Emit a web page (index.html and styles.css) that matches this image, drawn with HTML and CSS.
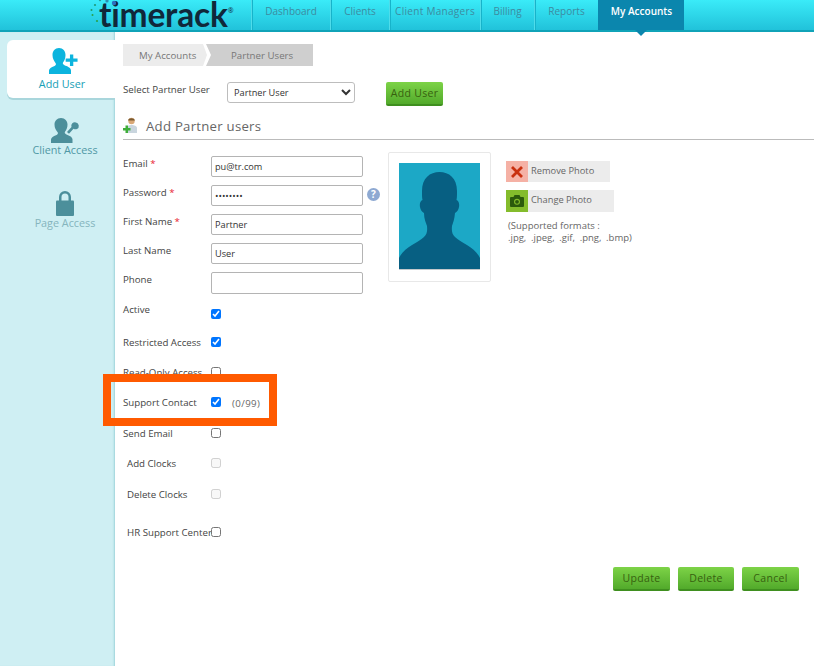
FILE: index.html
```html
<!DOCTYPE html>
<html lang="en">
<head>
<meta charset="utf-8">
<title>Add Partner users</title>
<link rel="stylesheet" href="styles.css">
</head>
<body>
<div class="page">
  <header class="topbar">
    <div class="logo">
      <svg class="logo-dots" width="30" height="24" viewBox="0 0 30 24" aria-hidden="true">
        <circle cx="24" cy="3" r="2.2" fill="#2d6fc0"/><circle cx="17" cy="1" r="1.6" fill="#2a8fb0"/><circle cx="10" cy="0" r="1.2" fill="#2a9a9a"/>
        <circle cx="5" cy="5" r="1.1" fill="#1f9a7a"/><circle cx="1.5" cy="10" r="1" fill="#1f9a6a"/><circle cx="2.5" cy="15" r="1" fill="#2aa04a"/><circle cx="7" cy="21" r="1.1" fill="#2aa04a"/>
      </svg>
      <span class="logo-text">timerack</span><span class="logo-reg">®</span>
    </div>
    <nav class="tabs">
      <a class="tab t-dash">Dashboard</a>
      <a class="tab t-clients">Clients</a>
      <a class="tab t-mgr">Client Managers</a>
      <a class="tab t-bill">Billing</a>
      <a class="tab t-rep">Reports</a>
      <a class="tab t-acc active">My Accounts</a>
    </nav>
  </header>
  <div class="main">
    <aside class="sidebar">
      <div class="side-item current">
        <svg width="30" height="27" viewBox="0 0 30 27" aria-hidden="true">
          <path fill="#0cb4de" d="M10 0c4 0 6.5 3 6.5 7 0 3-1 5.500-2.500 7.500-.5 1 0 2 1.500 2.700 2.500 1.100 6.500 2.300 6.500 5.300v3.500H0v-3.500c0-2 2.500-3.300 5-4.300 1.500-.7 2.300-1.600 1.800-2.800C5 13 3.500 10.500 3.500 7c0-4 2.500-7 6.500-7z"/>
          <path fill="#0cb4de" d="M21 8h3.500v4H29v3.500h-4.500V20H21v-4.500h-4.500V12H21z" transform="translate(1 -1) scale(.95)"/>
        </svg>
        <span>Add User</span>
      </div>
      <div class="side-item">
        <svg width="30" height="25" viewBox="0 0 30 25" aria-hidden="true">
          <path fill="#4c8f9b" d="M11 0c4 0 6.500 3 6.500 6.500 0 3-1 5.500-2.500 7.300-.5 1-.3 1.700 1 2.400 2.500 1.200 6.500 2.300 6.500 5.300V25H1v-3.500c0-2 2.500-3.300 5-4.300 1.500-.7 2.300-1.600 1.800-2.800C6 12.500 4.500 10 4.500 6.500 4.500 3 7 0 11 0z"/>
          <path fill="#4c8f9b" d="M26 4.500a3.500 3.500 0 0 1 1 6.500 3.500 3.500 0 0 1-3.500-.3l-4.500 5-2-1.700 4.500-5a3.500 3.500 0 0 1 4.500-4.500z"/>
        </svg>
        <span>Client Access</span>
      </div>
      <div class="side-item faded">
        <svg width="20" height="26" viewBox="0 0 20 26" aria-hidden="true">
          <path fill="#4c8f9b" d="M4 11V7a6 6 0 0 1 12 0v4h-2.500V7a3.500 3.500 0 0 0-7 0v4z"/>
          <rect fill="#4c8f9b" x="1" y="10.500" width="18" height="15.500" rx="1"/>
        </svg>
        <span>Page Access</span>
      </div>
    </aside>
    <main class="content">
      <div class="crumbs">
        <span class="crumb first">My Accounts</span>
        <span class="crumb second">Partner Users</span>
      </div>
      <div class="select-row">
        <label class="select-label">Select Partner User</label>
        <select class="select"><option>Partner User</option></select>
        <button class="btn add-btn" type="button">Add User</button>
      </div>
      <h2 class="heading">
        <svg width="15" height="17" viewBox="0 0 15 17" aria-hidden="true">
          <circle cx="8.500" cy="4" r="3.200" fill="#d9a877"/><path d="M5 3.500c.5-3 6-3 7 0z" fill="#7a5a30"/>
          <path d="M3.500 16V11c0-2 2.500-3 5-3s5.500 1 5.500 3v5z" fill="#c9d5de"/>
          <path d="M2.500 8.500h2.500v2.500h2.500v2.500H5V16H2.500v-2.500H0V11h2.500z" fill="#3fae3a"/>
        </svg>
        <span>Add Partner users</span>
      </h2>
      <div class="form-area">
        <form class="form">
          <div class="row"><label>Email <em>*</em></label><input class="field" type="text" value="pu@tr.com"></div>
          <div class="row"><label>Password <em>*</em></label><input class="field" type="password" value="password"><span class="help">?</span></div>
          <div class="row"><label>First Name <em>*</em></label><input class="field" type="text" value="Partner"></div>
          <div class="row"><label>Last Name</label><input class="field" type="text" value="User"></div>
          <div class="row"><label>Phone</label><input class="field tall" type="text"></div>
          <div class="check-row active-row"><label>Active</label><input type="checkbox" checked></div>
          <div class="check-row"><label>Restricted Access</label><input type="checkbox" checked></div>
          <div class="check-row"><label>Read-Only Access</label><input type="checkbox"></div>
          <div class="check-row"><label>Support Contact</label><input type="checkbox" checked><span class="count">(0/99)</span></div>
          <div class="check-row send-row"><label>Send Email</label><input type="checkbox"></div>
          <div class="check-row indent"><label>Add Clocks</label><input type="checkbox" disabled></div>
          <div class="check-row indent clock-row"><label>Delete Clocks</label><input type="checkbox" disabled></div>
          <div class="check-row indent hr-row"><label>HR Support Center</label><input type="checkbox"></div>
        </form>
        <div class="photo-card">
          <svg class="photo" width="81" height="107" viewBox="0 0 81 107" aria-hidden="true">
            <rect width="81" height="107" fill="#1ca8c6"/>
            <path fill="#075f82" d="M40.500 9C50 9 58 15 58 28C58 32 58 35 57.500 37C60 38 60.500 41 60 44C59.500 47 58 49 56 50C55.500 56 54 60 53 63C52.500 68 53 71 56 74C62 80 76 84 81 95V106H0V95C5 84 19 80 25 74C28 71 28.500 68 28 63C27 60 25 56 25 50C23 49 21.500 47 21 44C20.500 41 21 38 23.500 37C23 35 23 32 23 28C23 15 31 9 40.500 9Z"/>
            <rect y="106" width="81" height="1" fill="#c4c9cc"/>
          </svg>
        </div>
        <div class="photo-actions">
          <div class="photo-btn remove">
            <span class="photo-icon">
              <svg width="12" height="12" viewBox="0 0 12 12" aria-hidden="true"><path d="M1 1l10 10M11 1L1 11" stroke="#c9300f" stroke-width="2.800"/></svg>
            </span>
            <span class="photo-label">Remove Photo</span>
          </div>
          <div class="photo-btn change">
            <span class="photo-icon">
              <svg width="14" height="12" viewBox="0 0 14 12" aria-hidden="true"><path fill="#2c5a0c" d="M4.500 0h5l1 2H13a1 1 0 0 1 1 1v8a1 1 0 0 1-1 1H1a1 1 0 0 1-1-1V3a1 1 0 0 1 1-1h2.500z"/><circle cx="7" cy="6.800" r="3" fill="#84bc2c"/><circle cx="7" cy="6.800" r="1.900" fill="#2c5a0c"/></svg>
            </span>
            <span class="photo-label">Change Photo</span>
          </div>
          <p class="formats">(Supported formats :<br><span class="format-list">.jpg, .jpeg, .gif, .png, .bmp)</span></p>
        </div>
      </div>
      <div class="actions">
        <button class="btn" type="button">Update</button>
        <button class="btn narrow" type="button">Delete</button>
        <button class="btn" type="button">Cancel</button>
      </div>
    </main>
  </div>
  <div class="highlight" aria-hidden="true"></div>
</div>
</body>
</html>
```

FILE: styles.css
```css
* { box-sizing: border-box; }
html, body { margin: 0; height: 100%; }
body {
  font-family: "Open Sans", "Liberation Sans", sans-serif;
  font-size: 9.700px;
  color: #444;
  background: #fff;
  overflow: hidden;
}
.page { position: relative; width: 814px; height: 666px; overflow: hidden; display: flex; flex-direction: column; }

/* top bar */
.topbar {
  flex: 0 0 32px;
  display: flex;
  background: linear-gradient(#3aebf8, #21c2da);
  border-bottom: 2px solid #10a3b8;
}
.logo { position: relative; width: 251px; padding-left: 99px; display: flex; align-items: flex-start; }
.logo-dots { position: absolute; left: 90px; top: 0; }
.logo-text { font-family: "Lato", "Open Sans", sans-serif; font-weight: 700; font-size: 33.500px; line-height: 28px; color: #10283a; letter-spacing: -.2px; }
.logo-reg { font-size: 7px; line-height: 10px; color: #10283a; margin-top: 6px; }
.tabs { display: flex; height: 30px; }
.tab {
  display: flex; align-items: center; justify-content: center;
  padding-bottom: 8px;
  border-left: 1px solid #4fdcea;
  box-shadow: inset 1px 0 0 #17b3ca;
  color: #3d8ba0;
  font-size: 10px;
}
.t-dash { width: 79px; }
.t-clients { width: 59px; }
.t-mgr { width: 91px; letter-spacing: .3px; }
.t-bill { width: 54px; }
.t-rep { width: 64px; }
.t-acc { width: 86px; }
.tab.active { position: relative; background: #0b86ad; color: #fff; font-weight: 600; border-left-color: #0b86ad; box-shadow: none; }
.tab.active::after {
  content: ""; position: absolute; left: 36px; top: 30px;
  border: 6px solid transparent; border-top-color: #0b86ad; border-bottom-width: 0;
}

/* body layout */
.main { flex: 1; display: flex; min-height: 0; }
.sidebar {
  flex: 0 0 115px;
  background: #cfeff3;
  padding: 8px 0 0;
  display: flex; flex-direction: column;
  box-shadow: inset -2px 0 2px -1px #9ed3da;
}
.side-item {
  display: flex; flex-direction: column; align-items: center;
  padding-left: 15px;
  height: 72px;
  color: #4f98a5; font-size: 10.800px; line-height: 14px;
  font-weight: 400;
}
.side-item.current {
  height: 58px; margin: 0 0 20px 7px; padding: 8px 0 0 2px;
  background: #fff; border-radius: 6px 0 0 6px;
  box-shadow: 0 2px 0 #a9d6dc;
  color: #17a0b6; gap: 2px;
}
.side-item.current svg { margin-left: 4px; }
.side-item.faded { color: #85b5bd; }

.content { flex: 1; padding: 12px 0 0 8px; min-width: 0; }

/* breadcrumb */
.crumbs { display: flex; height: 22px; }
.crumb { display: flex; align-items: center; color: #777; }
.crumb.first { width: 84px; padding-left: 16px; background: #ececec; position: relative; z-index: 1; clip-path: polygon(0 0, 80px 0, 84px 11px, 80px 100%, 0 100%); }
.crumb.second { width: 107px; margin-left: -1px; padding-left: 25px; background: #cfcfcf; clip-path: polygon(0 0, 100% 0, 100% 100%, 0 100%, 5px 11px); }

.select-row { display: flex; align-items: flex-start; margin-top: 16px; height: 24px; }
.select-label { width: 104px; line-height: 14px; margin-top: 1px; color: #444; }
.select {
  width: 128px; height: 21px; padding: 0 0 0 2px;
  font-family: inherit; font-size: 9.200px; color: #333;
  background: #fff; border: 1px solid #bdbdbd; border-radius: 3px;
}
.add-btn { margin-left: 31px; width: 58px; }

.btn {
  width: 57px; height: 24px; padding: 0;
  font-family: inherit; font-size: 10.500px; letter-spacing: .3px; color: #37610f;
  background: linear-gradient(#7dd347, #52aa2b);
  border: 0; border-bottom: 2px solid #3f8f1f; border-radius: 2px;
}
.btn.narrow { width: 56px; }

.heading {
  display: flex; align-items: center; gap: 8px;
  margin: 10px 0 0; height: 24px; padding-bottom: 4px;
  border-bottom: 1px solid #bbb;
  font-size: 13.200px; font-weight: 400; color: #666; letter-spacing: .25px;
}

.form-area { display: flex; align-items: flex-start; margin-top: 16px; }
.form { width: 265px; display: flex; flex-direction: column; }
.row { display: flex; align-items: flex-start; margin-bottom: 8px; height: 21px; }
.row label { width: 88px; line-height: 14px; margin-top: 1px; }
.row em { font-style: normal; color: #e8212e; }
.field {
  width: 152px; height: 21px; padding: 0 3px;
  font-family: "Open Sans", sans-serif; font-size: 9.200px; color: #333;
  border: 1px solid #b4b4b4; border-radius: 2px; background: #fff;
}
.field.tall { height: 22px; }
.help {
  position: relative; left: 4px; top: 3px;
  width: 13px; height: 13px; border-radius: 50%;
  background: #8ea9d2; color: #fff; font-weight: 700; font-size: 10px; line-height: 13px; text-align: center;
}
.check-row { display: flex; align-items: center; height: 30px; }
.check-row label { width: 88px; line-height: 14px; white-space: nowrap; }
.check-row input { width: 10px; height: 10px; margin: 0 0 2px; flex: none; }
.active-row { margin-top: -1px; margin-bottom: -2px; }
.active-row label { margin-bottom: 10px; }
.send-row { margin-top: 1px; }
.indent label { padding-left: 4px; }
.clock-row { margin-top: 1px; margin-bottom: 8px; }
.count { margin-left: 11px; color: #666; letter-spacing: .4px; }

.photo-card {
  width: 103px; height: 130px; margin-top: -4px; padding: 10px 0 0 11px;
  background: #fff; border: 1px solid #e8e8e8; border-radius: 2px;
}
.photo { display: block; margin-left: -1px; }
.photo-actions { margin: 5px 0 0 15px; }
.photo-btn { display: flex; align-items: center; gap: 3px; height: 21px; width: 104px; background: #ececec; color: #666; font-size: 9.300px; margin-bottom: 8px; }
.photo-btn.change { width: 108px; height: 22px; }
.photo-label { padding-bottom: 3px; }
.change .photo-label { padding-bottom: 4px; }
.photo-icon { flex: 0 0 22px; height: 100%; display: flex; align-items: center; justify-content: center; }
.remove .photo-icon { background: #f5b1a5; }
.change .photo-icon { background: #84bc2c; }
.formats { margin: 7px 0 0 2px; font-size: 9.500px; line-height: 11.500px; color: #666; }
.format-list { word-spacing: 2.200px; }

.actions { display: flex; justify-content: flex-end; gap: 8px; margin-top: 19px; padding-right: 15px; }

.highlight {
  position: absolute; left: 103px; top: 374px; width: 174px; height: 52px;
  border: 8px solid #ff5a00;
}
```
